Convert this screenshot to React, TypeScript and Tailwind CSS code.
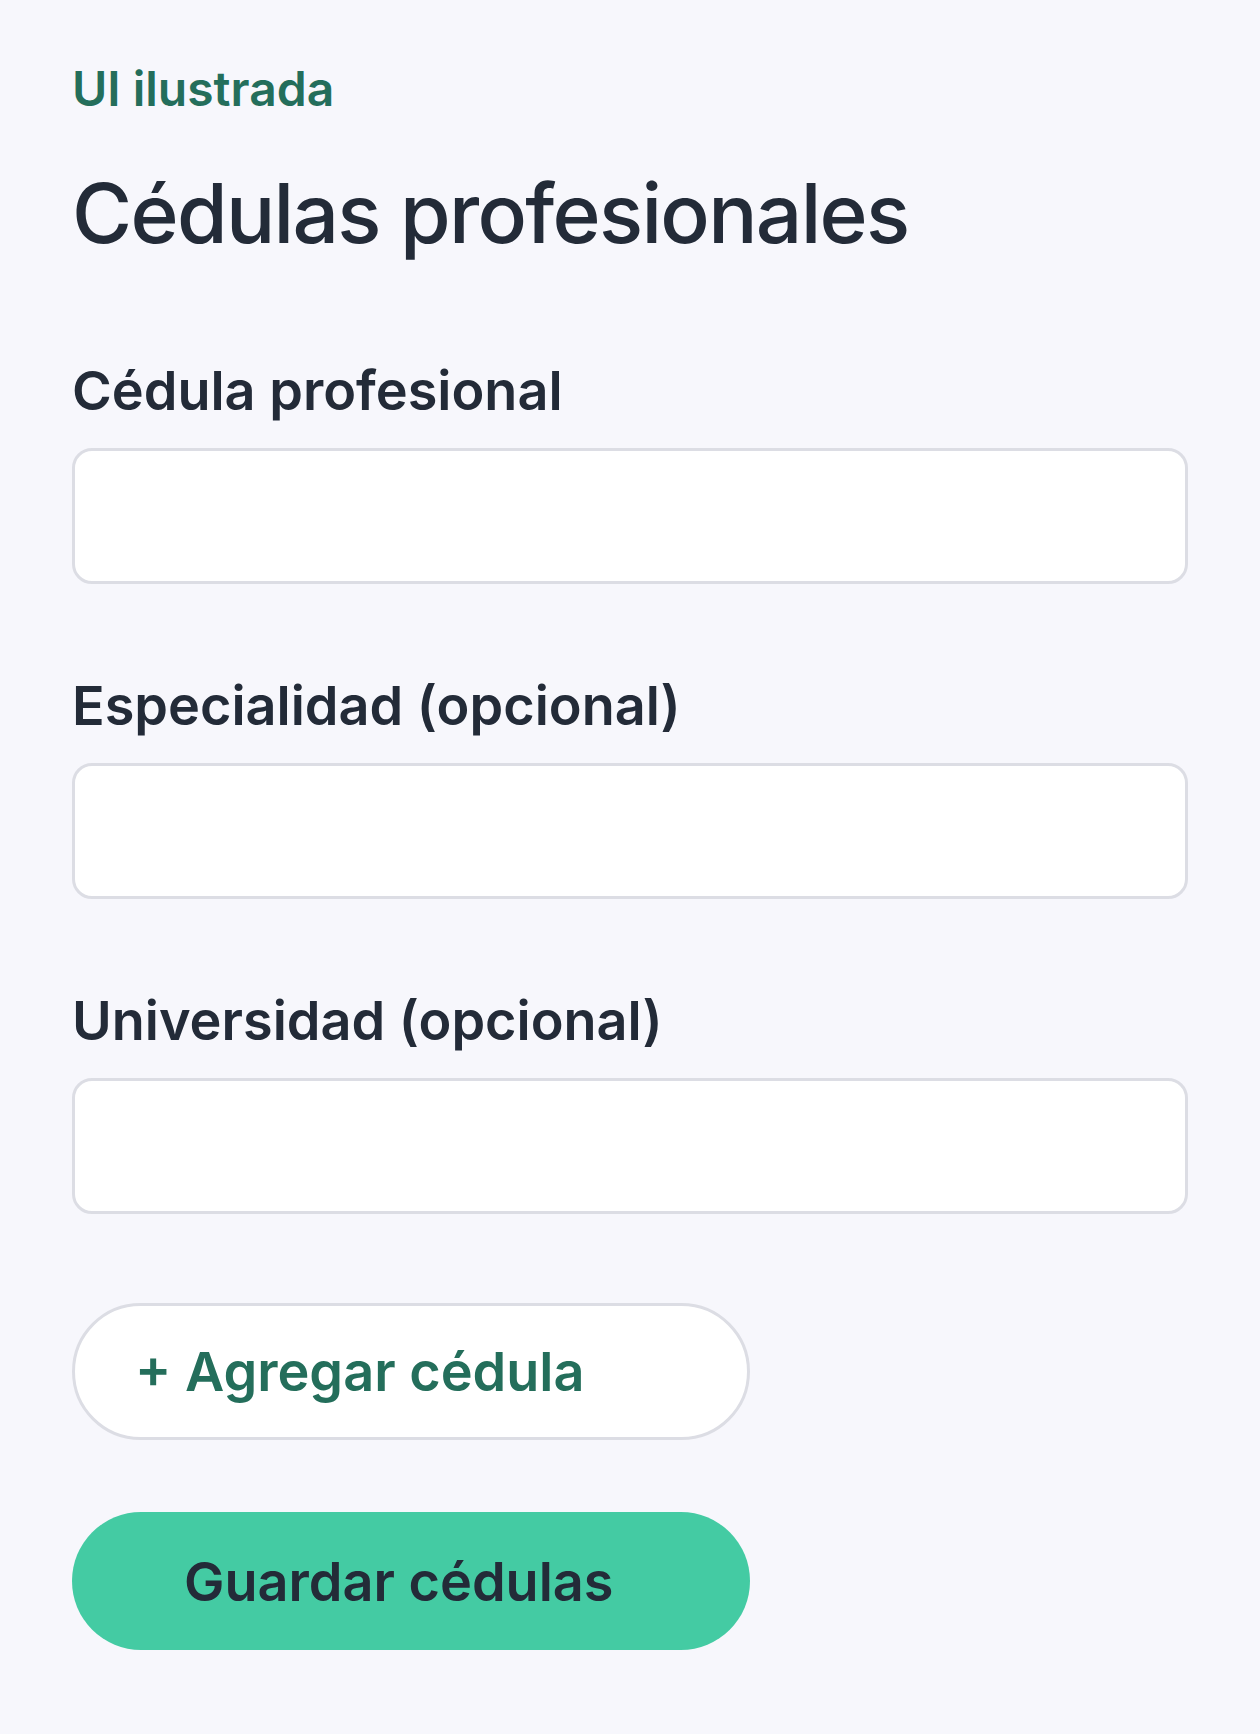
export default function App() {
  const fields = ["Cédula profesional", "Especialidad (opcional)", "Universidad (opcional)"];

  return (
    <div className="min-h-[1734px] w-full bg-[#f7f7fc] px-[72px] pt-[65px] font-['Inter',sans-serif] text-[#232b38]">
      <p className="text-[48px] font-semibold leading-[48px] text-[#246e5b]">UI ilustrada</p>

      <h1 className="mt-[60px] text-[82px] font-medium leading-[82px] tracking-[-1.7px]">
        Cédulas profesionales
      </h1>

      <div className="mt-[109px] flex flex-col gap-[95px]">
        {fields.map((label) => (
          <div key={label} className="flex flex-col">
            <label className="text-[54px] font-semibold leading-[54px]">{label}</label>
            <input
              type="text"
              className="mt-[30px] h-[136px] w-full rounded-[20px] border-[3px] border-[#dcdde4] bg-white px-[36px] text-[48px] outline-none"
            />
          </div>
        ))}
      </div>

      <button className="mt-[89px] flex h-[137px] w-[678px] items-center rounded-full border-[3px] border-[#dcdde4] bg-white pl-[60px] text-[54px] font-semibold text-[#246e5b]">
        + Agregar cédula
      </button>

      <button className="mt-[72px] flex h-[138px] w-[678px] items-center rounded-full bg-[#44cba3] pl-[112px] text-[54px] font-semibold text-[#232b38]">
        Guardar cédulas
      </button>
    </div>
  );
}
